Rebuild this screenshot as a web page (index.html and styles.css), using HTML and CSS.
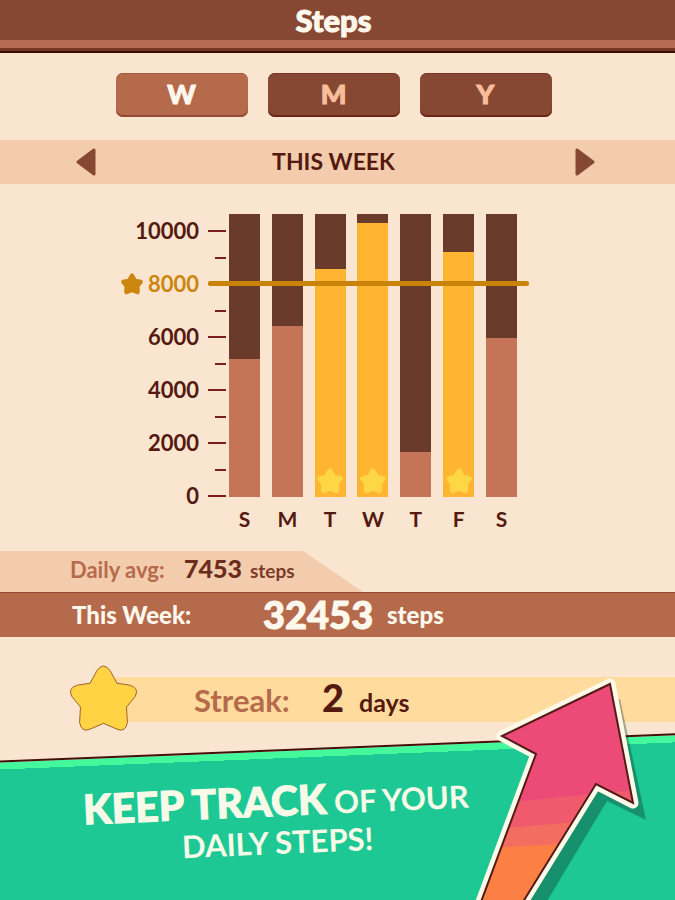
FILE: index.html
```html
<!DOCTYPE html>
<html lang="en">
<head>
<meta charset="utf-8">
<meta name="viewport" content="width=device-width, initial-scale=1">
<title>Steps</title>
<link rel="stylesheet" href="styles.css">
</head>
<body>
<svg class="defs" aria-hidden="true">
  <symbol id="star" viewBox="0 0 70 70">
    <path d="M28 6Q35-4 42 6L49 19L62 21Q73 24 68 33L59 44L60 60Q58 71 49 67L35 61L21 67Q12 71 10 60L11 44L2 33Q-3 24 8 21L21 19Z"/>
  </symbol>
</svg>
<div class="page">
  <header class="header"><h1>Steps</h1></header>
  <nav class="tabs" aria-label="Period">
    <button class="tab tab-active" type="button">W</button>
    <button class="tab" type="button">M</button>
    <button class="tab" type="button">Y</button>
  </nav>
  <div class="period">
    <button class="arrow" type="button" aria-label="Previous week"><svg viewBox="0 0 21 28"><path d="M18 2V26L2 14Z"/></svg></button>
    <h2>THIS WEEK</h2>
    <button class="arrow" type="button" aria-label="Next week"><svg viewBox="0 0 21 28"><path d="M3 2V26L19 14Z"/></svg></button>
  </div>
  <section class="chart" aria-label="Steps per day">
    <div class="labels">
      <span>10000</span>
      <span class="goal"><svg class="goal-star"><use href="#star"/></svg>8000</span>
      <span>6000</span>
      <span>4000</span>
      <span>2000</span>
      <span>0</span>
    </div>
    <div class="ticks"><i></i><i></i><i></i><i></i><i></i><i></i><i></i><i></i><i></i><i></i><i></i></div>
    <div class="bars">
      <div class="day"><div class="bar"><div class="fill" style="height:48.8%"></div></div><span>S</span></div>
      <div class="day"><div class="bar"><div class="fill" style="height:60.4%"></div></div><span>M</span></div>
      <div class="day"><div class="bar"><div class="fill met" style="height:80.6%"><svg><use href="#star"/></svg></div></div><span>T</span></div>
      <div class="day"><div class="bar"><div class="fill met" style="height:96.8%"><svg><use href="#star"/></svg></div></div><span>W</span></div>
      <div class="day"><div class="bar"><div class="fill" style="height:15.9%"></div></div><span>T</span></div>
      <div class="day"><div class="bar"><div class="fill met" style="height:86.6%"><svg><use href="#star"/></svg></div></div><span>F</span></div>
      <div class="day"><div class="bar"><div class="fill" style="height:56.2%"></div></div><span>S</span></div>
      <div class="goal-line"></div>
    </div>
  </section>
  <section class="average">
    <span class="average-name">Daily avg:</span>
    <strong>7453</strong>
    <span class="average-unit">steps</span>
  </section>
  <section class="total">
    <span class="total-name">This Week:</span>
    <strong>32453</strong>
    <span class="total-unit">steps</span>
  </section>
  <section class="streak">
    <svg class="streak-star"><use href="#star"/></svg>
    <div class="streak-band">
      <span class="streak-name">Streak:</span>
      <strong>2</strong>
      <span class="streak-unit">days</span>
    </div>
  </section>
  <footer class="promo">
    <div class="promo-back"></div>
    <p><strong>KEEP TRACK</strong> OF YOUR<br>DAILY STEPS!</p>
    <svg class="promo-arrow" viewBox="470 670 205 230" aria-hidden="true">
      <defs>
        <clipPath id="arrow-shape"><path d="M610 684L502 736L536 754L475 918H513L596 784L633 803Z"/></clipPath>
      </defs>
      <path class="arrow-shadow" d="M620 699L510 744L546 765L488 918H537L607 801L646 820Z"/>
      <path class="arrow-edge" d="M610 684L502 736L536 754L475 918H513L596 784L633 803Z"/>
      <g clip-path="url(#arrow-shape)">
        <path fill="#ec4a77" d="M470 670H675V900H470Z"/>
        <path fill="#ef5a6c" d="M470 806L675 786V910H470Z"/>
        <path fill="#f36e61" d="M470 831L675 814V910H470Z"/>
        <path fill="#fc7f43" d="M470 849L675 838V910H470Z"/>
      </g>
      <path class="arrow-line" d="M610 684L502 736L536 754L475 918H513L596 784L633 803Z"/>
    </svg>
  </footer>
</div>
</body>
</html>
```
FILE: styles.css
```css
* { box-sizing: border-box; }
body {
  margin: 0;
  background: #fae5d1;
  color: #54190f;
  font-family: Lato, "Open Sans", sans-serif;
  font-weight: 700;
}
h1, h2, p { margin: 0; }
button { border: 0; padding: 0; font: inherit; cursor: pointer; }
.defs { display: none; }
.page { display: flex; flex-direction: column; min-height: 100vh; overflow: hidden; }

.header {
  height: 53px;
  background: linear-gradient(#864833 40px, #b56b53 40px 48px, #723623 48px 51px, #3f0d06 51px);
  text-align: center;
  padding-right: 8px;
}
.header h1 { font-size: 31px; line-height: 40px; font-weight: 900; color: #fff8ec; -webkit-text-stroke: 1px; }

.tabs { display: flex; justify-content: center; gap: 20px; padding: 20px 8px 23px 0; }
.tab {
  width: 132px;
  height: 44px;
  padding-bottom: 3px;
  border-radius: 7px;
  background: #864833;
  box-shadow: inset 0 -2px #6b2819, inset 0 1px #793b28;
  color: #f8bd9b;
  font-size: 27px;
  font-weight: 900;
  -webkit-text-stroke: 1px;
}
.tab-active { background: #b66a4c; box-shadow: inset 0 -2px #934b33, inset 0 1px #a55a40; color: #fff8ec; }

.period {
  display: flex;
  align-items: center;
  justify-content: space-between;
  height: 44px;
  padding: 0 11.8% 0 11.2%;
  background: #f2ccac;
}
.period h2 { font-size: 23px; line-height: 42px; padding: 0 4px 2px 0; font-weight: 700; }
.arrow { width: 21px; height: 28px; background: none; }
.arrow svg { display: block; fill: #864833; stroke: #864833; stroke-width: 3; stroke-linejoin: round; }

.chart { display: flex; justify-content: center; padding: 20px 37px 0 0; height: 367px; }
.labels { width: 78px; margin-right: 9px; font-size: 22px; text-align: right; }
.labels span { display: block; height: 53px; line-height: 53px; }
.labels .goal { display: flex; align-items: center; justify-content: space-between; color: #cc860d; }
.goal-star { width: 22px; height: 22px; fill: #cc860d; }
.ticks {
  display: flex;
  flex-direction: column;
  justify-content: space-between;
  align-items: flex-end;
  width: 18px;
  height: 267px;
  margin: 26px 3px 0 0;
}
.ticks i { width: 11px; height: 2px; background: #7a1f1c; }
.ticks i:nth-child(odd) { width: 18px; }
.bars { position: relative; display: flex; justify-content: space-between; width: 288px; margin-top: 10px; }
.day { width: 31px; font-size: 21px; text-align: center; }
.day span { display: block; line-height: 44px; }
.bar { display: flex; flex-direction: column; justify-content: flex-end; height: 283px; background: #6a3a2b; }
.fill { display: flex; align-items: flex-end; justify-content: center; background: #c57457; }
.met { background: #ffb432; }
.met svg { width: 26px; height: 26px; margin-bottom: 3px; fill: #ffd645; }
.goal-line {
  position: absolute;
  top: 67px;
  left: -21px;
  right: -12px;
  height: 5px;
  border-radius: 2px;
  background: #c98308;
}

.average, .total, .streak-band { display: flex; align-items: baseline; }
.average {
  width: 363px;
  height: 41px;
  padding-left: 70px;
  background: #f2ccac;
  clip-path: polygon(0 0, 303px 0, 100% 100%, 0 100%);
  line-height: 34px;
}
.average-name { width: 114px; font-size: 22px; color: #b66a4c; }
.average strong { width: 66px; font-size: 25px; color: #6b2b1d; }
.average-unit { font-size: 19px; color: #7c3b2a; }
.total {
  align-items: center;
  height: 45px;
  padding: 0 0 2px 72px;
  border-top: 1px solid #934b33;
  background: #b66a4c;
  color: #fff8ec;
}
.total-name { width: 191px; font-size: 24px; font-weight: 900; }
.total strong { width: 124px; font-size: 38px; line-height: 38px; font-weight: 900; -webkit-text-stroke: 1px; }
.total-unit { font-size: 24px; font-weight: 900; }
.streak { display: flex; align-items: center; padding: 28px 0 0 69px; }
.streak-star { width: 69px; height: 67px; fill: #ffd343; stroke: #9b5d2b; stroke-width: 1; overflow: visible; z-index: 1; }
.streak-band {
  flex: 1;
  height: 45px;
  margin: 1px 0 0 -30px;
  padding-left: 86px;
  background: #ffdb9e;
  line-height: 41px;
}
.streak-name { width: 128px; font-size: 31px; color: #b66a4c; }
.streak-band strong { width: 37px; font-size: 38px; font-weight: 900; }
.streak-unit { font-size: 25px; }

.promo { position: relative; flex: 1; min-height: 168px; padding-top: 50px; }
.promo-back {
  position: absolute;
  inset: 15px -10px -40px;
  transform: rotate(-2.3deg);
  border-top: 2px solid #45100c;
  background: linear-gradient(#44f99b 7px, #1ec895 7px);
}
.promo p {
  position: relative;
  width: 82%;
  text-align: center;
  transform: rotate(-2.5deg);
  color: #f8fae8;
  font-size: 31px;
  line-height: 38px;
}
.promo strong { font-size: 41px; font-weight: 900; -webkit-text-stroke: 1px; }
.promo-arrow { position: absolute; right: 0; bottom: 0; width: 205px; height: 230px; }
.arrow-shadow { fill: #0b2b22; fill-opacity: 0.35; }
.arrow-edge { fill: #fff9e8; stroke: #fff9e8; stroke-width: 11; stroke-linejoin: round; }
.arrow-line { fill: none; stroke: #541a18; stroke-width: 2; }
```
